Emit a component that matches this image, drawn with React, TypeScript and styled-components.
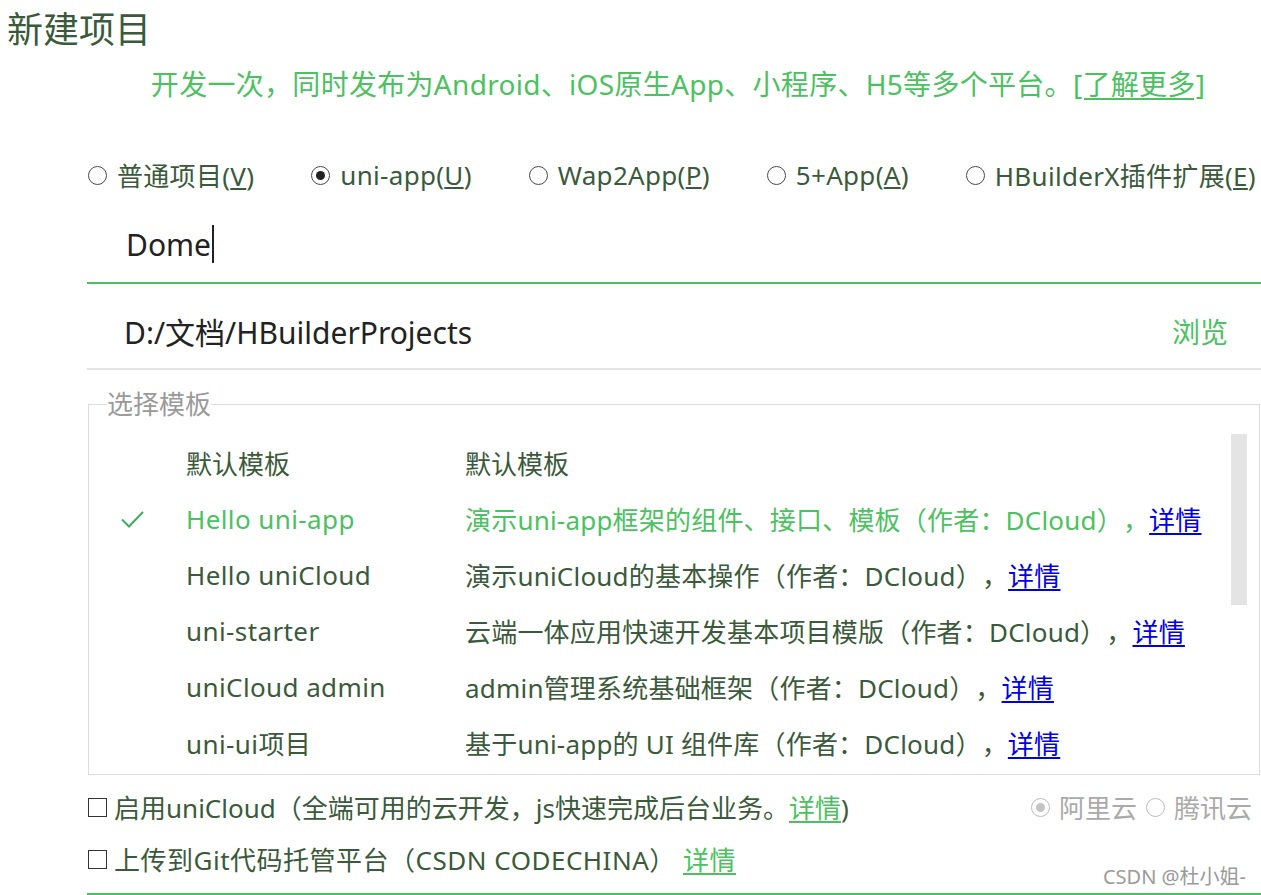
import React from "react";
import styled, { createGlobalStyle } from "styled-components";

const GREEN = "#4bc25f";
const TEXT = "#3b5a3b";

const GlobalStyle = createGlobalStyle`
  html, body { margin: 0; padding: 0; background: #fff; }
  body {
    font-family: "Noto Sans", "Noto Sans CJK SC", sans-serif;
    color: ${TEXT};
    overflow: hidden;
    text-spacing-trim: space-all;
  }
  * { box-sizing: border-box; }
`;

const Page = styled.div`
  position: relative;
  width: 1261px;
  height: 895px;
`;

const Title = styled.h1`
  margin: 0;
  padding-left: 7px;
  height: 60px;
  line-height: 60px;
  font-size: 36px;
  font-weight: 400;
  color: ${TEXT};
`;

const Content = styled.div`
  margin-left: 87px;
  display: flex;
  flex-direction: column;
`;

const Subtitle = styled.div`
  height: 48px;
  line-height: 48px;
  padding-left: 8px;
  font-size: 28px;
  letter-spacing: 0.3px;
  text-align: center;
  color: ${GREEN};
  white-space: nowrap;
`;

const GreenLink = styled.a`
  color: ${GREEN};
  text-decoration: underline;
  text-underline-offset: 3px;
`;

const BlueLink = styled.a`
  color: #0000ee;
  text-decoration: underline;
  text-underline-offset: 3px;
`;

const RadioRow = styled.div`
  margin-top: 43px;
  height: 48px;
  display: flex;
  align-items: center;
  gap: 57px;
  padding-left: 1px;
  white-space: nowrap;
`;

const RadioItem = styled.label<{ $muted?: boolean; $spacing?: number }>`
  display: flex;
  align-items: center;
  gap: ${(p) => (p.$muted ? 9 : 10)}px;
  font-size: 26px;
  letter-spacing: ${(p) => p.$spacing ?? 0}px;
  color: ${(p) => (p.$muted ? "#aaaaaa" : TEXT)};
`;

const RadioCircle = styled.span<{ $checked?: boolean; $muted?: boolean }>`
  width: 19px;
  height: 19px;
  border-radius: 50%;
  border: 1px solid ${(p) => (p.$muted ? "#bdbdbd" : "#4a4a4a")};
  display: flex;
  align-items: center;
  justify-content: center;
  flex: none;
  &::after {
    content: "";
    display: ${(p) => (p.$checked ? "block" : "none")};
    width: 9px;
    height: 9px;
    border-radius: 50%;
    background: ${(p) => (p.$muted ? "#c4c4c4" : "#222")};
  }
`;

const NameInput = styled.div`
  height: 85px;
  padding: 7px 0 0 39px;
  display: flex;
  align-items: center;
  font-size: 30px;
  color: #222;
  border-bottom: 2px solid ${GREEN};
`;

const Caret = styled.span`
  display: inline-block;
  width: 2px;
  height: 38px;
  margin-left: 1px;
  background: #222;
`;

const PathRow = styled.div`
  height: 86px;
  padding: 10px 33px 0 37px;
  display: flex;
  align-items: center;
  justify-content: space-between;
  font-size: 30px;
  color: #222;
  border-bottom: 2px solid #e3e3e3;
`;

const Browse = styled.span`
  color: ${GREEN};
  font-size: 28px;
`;

const Fieldset = styled.fieldset`
  margin: 19px 1px 0 1px;
  padding: 0;
  border: 1px solid #dcdcdc;
  min-width: 0;
`;

const Legend = styled.legend`
  margin-left: 18px;
  padding: 0;
  font-size: 26px;
  line-height: 30px;
  color: #9a9a9a;
`;

const FieldBody = styled.div`
  display: flex;
`;

const TemplateList = styled.div`
  flex: 1;
  padding: 16px 0 3px;
  display: flex;
  flex-direction: column;
`;

const TemplateRow = styled.div<{ $active?: boolean }>`
  display: grid;
  grid-template-columns: 97px 279px 1fr;
  align-items: center;
  height: 56px;
  font-size: 26px;
  white-space: nowrap;
  color: ${(p) => (p.$active ? GREEN : TEXT)};
`;

const NameCell = styled.span`
  letter-spacing: 0.4px;
`;

const DescCell = styled.span`
  letter-spacing: 0.2px;
`;

const CheckCell = styled.span`
  display: flex;
  align-items: center;
  padding-left: 31px;
`;

const ScrollTrack = styled.div`
  width: 16px;
  margin: 15px 12px 0 0;
  flex: none;
`;

const ScrollThumb = styled.div`
  height: 171px;
  background: #e4e4e4;
`;

const Options = styled.div`
  margin-top: 6px;
  display: flex;
  flex-direction: column;
`;

const OptionRow = styled.div<{ $spacing?: number }>`
  height: 52px;
  display: flex;
  align-items: center;
  font-size: 26px;
  letter-spacing: ${(p) => p.$spacing ?? 0}px;
  white-space: nowrap;
  color: ${TEXT};
`;

const Checkbox = styled.span`
  width: 19px;
  height: 19px;
  border: 1px solid #333;
  margin: 0 7px 0 1px;
  flex: none;
`;

const CloudChoice = styled.div`
  margin-left: auto;
  padding-right: 9px;
  display: flex;
  align-items: center;
  gap: 9px;
`;

const Footer = styled.div`
  margin-top: 8px;
  border-top: 2px solid ${GREEN};
`;

const Watermark = styled.div`
  position: absolute;
  right: 15px;
  top: 863px;
  font-size: 20px;
  line-height: 28px;
  color: #9a9a9a;
`;

const CheckIcon = () => (
  <svg width="25" height="20" viewBox="0 0 25 20">
    <path d="M2 10.5 L9 17.5 L23 3" fill="none" stroke="#3fae5c" strokeWidth="2" />
  </svg>
);

const types = [
  { label: "普通项目", key: "V" },
  { label: "uni-app", key: "U", checked: true },
  { label: "Wap2App", key: "P" },
  { label: "5+App", key: "A" },
  { label: "HBuilderX插件扩展", key: "E" },
];

const templates = [
  { name: "Hello uni-app", desc: "演示uni-app框架的组件、接口、模板（作者：DCloud），", active: true },
  { name: "Hello uniCloud", desc: "演示uniCloud的基本操作（作者：DCloud），" },
  { name: "uni-starter", desc: "云端一体应用快速开发基本项目模版（作者：DCloud），" },
  { name: "uniCloud admin", desc: "admin管理系统基础框架（作者：DCloud），" },
  { name: "uni-ui项目", desc: "基于uni-app的 UI 组件库（作者：DCloud），" },
];

export default function App() {
  return (
    <Page>
      <GlobalStyle />
      <Title>新建项目</Title>
      <Content>
        <Subtitle>
          开发一次，同时发布为Android、iOS原生App、小程序、H5等多个平台。
          <GreenLink>[了解更多]</GreenLink>
        </Subtitle>
        <RadioRow>
          {types.map((t) => (
            <RadioItem key={t.key} $spacing={0.3}>
              <RadioCircle $checked={t.checked} />
              <span>
                {t.label}(<u>{t.key}</u>)
              </span>
            </RadioItem>
          ))}
        </RadioRow>
        <NameInput>
          Dome
          <Caret />
        </NameInput>
        <PathRow>
          <span>D:/文档/HBuilderProjects</span>
          <Browse>浏览</Browse>
        </PathRow>
        <Fieldset>
          <Legend>选择模板</Legend>
          <FieldBody>
            <TemplateList>
              <TemplateRow>
                <span />
                <span>默认模板</span>
                <span>默认模板</span>
              </TemplateRow>
              {templates.map((t) => (
                <TemplateRow key={t.name} $active={t.active}>
                  <CheckCell>{t.active && <CheckIcon />}</CheckCell>
                  <NameCell>{t.name}</NameCell>
                  <DescCell>
                    {t.desc}
                    <BlueLink>详情</BlueLink>
                  </DescCell>
                </TemplateRow>
              ))}
            </TemplateList>
            <ScrollTrack>
              <ScrollThumb />
            </ScrollTrack>
          </FieldBody>
        </Fieldset>
        <Options>
          <OptionRow>
            <Checkbox />
            <span>
              启用uniCloud（全端可用的云开发，js快速完成后台业务。<GreenLink>详情</GreenLink>)
            </span>
            <CloudChoice>
              <RadioItem $muted>
                <RadioCircle $checked $muted />
                <span>阿里云</span>
              </RadioItem>
              <RadioItem $muted>
                <RadioCircle $muted />
                <span>腾讯云</span>
              </RadioItem>
            </CloudChoice>
          </OptionRow>
          <OptionRow $spacing={0.5}>
            <Checkbox />
            <span>
              上传到Git代码托管平台（CSDN CODECHINA） <GreenLink>详情</GreenLink>
            </span>
          </OptionRow>
        </Options>
        <Footer />
      </Content>
      <Watermark>CSDN @杜小姐-</Watermark>
    </Page>
  );
}
